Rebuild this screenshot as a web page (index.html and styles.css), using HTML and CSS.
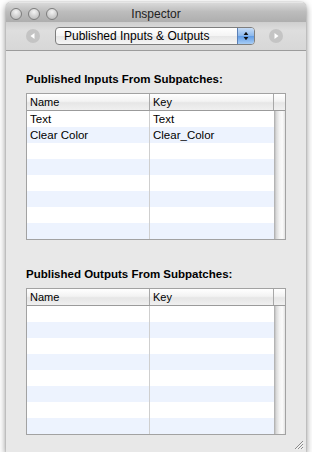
FILE: index.html
```html
<!DOCTYPE html>
<html>
<head>
<meta charset="utf-8">
<link rel="stylesheet" href="styles.css">
</head>
<body>
<div class="window">
  <div class="titlebar">
    <div class="lights">
      <span class="light"></span><span class="light"></span><span class="light"></span>
    </div>
    <div class="title">Inspector</div>
  </div>
  <div class="toolbar">
    <span class="nav"><svg width="14" height="14" viewBox="0 0 14 14"><path d="M8.5 4 L4.5 7 L8.5 10 Z" fill="#fff"/></svg></span>
    <div class="popup">
      <span class="popup-label">Published Inputs &amp; Outputs</span>
      <span class="stepper"><svg width="17" height="18" viewBox="0 0 17 18"><path d="M8.5 4.5 L11 8 L6 8 Z M8.5 13.5 L11 10 L6 10 Z" fill="#111"/></svg></span>
    </div>
    <span class="nav"><svg width="14" height="14" viewBox="0 0 14 14"><path d="M5.5 4 L9.5 7 L5.5 10 Z" fill="#fff"/></svg></span>
  </div>
  <div class="content">
    <section class="group">
      <h2 class="heading">Published Inputs From Subpatches:</h2>
      <div class="table">
        <div class="thead">
          <div class="th">Name</div>
          <div class="th">Key</div>
          <div class="th corner"></div>
        </div>
        <div class="tbody">
          <div class="rows">
            <div class="row"><div class="cell">Text</div><div class="cell">Text</div></div>
            <div class="row"><div class="cell">Clear Color</div><div class="cell">Clear_Color</div></div>
            <div class="row"><div class="cell"></div><div class="cell"></div></div>
            <div class="row"><div class="cell"></div><div class="cell"></div></div>
            <div class="row"><div class="cell"></div><div class="cell"></div></div>
            <div class="row"><div class="cell"></div><div class="cell"></div></div>
            <div class="row"><div class="cell"></div><div class="cell"></div></div>
            <div class="row"><div class="cell"></div><div class="cell"></div></div>
          </div>
          <div class="scroller"></div>
        </div>
      </div>
    </section>
    <section class="group">
      <h2 class="heading">Published Outputs From Subpatches:</h2>
      <div class="table">
        <div class="thead">
          <div class="th">Name</div>
          <div class="th">Key</div>
          <div class="th corner"></div>
        </div>
        <div class="tbody">
          <div class="rows">
            <div class="row"><div class="cell"></div><div class="cell"></div></div>
            <div class="row"><div class="cell"></div><div class="cell"></div></div>
            <div class="row"><div class="cell"></div><div class="cell"></div></div>
            <div class="row"><div class="cell"></div><div class="cell"></div></div>
            <div class="row"><div class="cell"></div><div class="cell"></div></div>
            <div class="row"><div class="cell"></div><div class="cell"></div></div>
            <div class="row"><div class="cell"></div><div class="cell"></div></div>
            <div class="row"><div class="cell"></div><div class="cell"></div></div>
          </div>
          <div class="scroller"></div>
        </div>
      </div>
    </section>
    <svg class="grip" width="12" height="12" viewBox="0 0 12 12">
      <path d="M11 3 L3 11 M11 6 L6 11 M11 9 L9 11" stroke="#8a8a8a" stroke-width="1"/>
      <path d="M11.5 4 L4 11.5 M11.5 7 L7 11.5 M11.5 10 L10 11.5" stroke="#fff" stroke-width="0.8"/>
    </svg>
  </div>
</div>
</body>
</html>
```

FILE: styles.css
```css
* { box-sizing: border-box; }
html, body { margin: 0; padding: 0; background: #fff; }
body {
  font-family: "Liberation Sans", Arial, sans-serif;
  color: #000;
  padding: 2px 0 0 6px;
}
.window {
  width: 300px;
  height: 450px;
  background: #e8e8e8;
  border-radius: 5px 5px 0 0;
  box-shadow: 0 3px 7px rgba(0,0,0,0.5), 0 0 1px rgba(0,0,0,0.4);
  display: flex;
  flex-direction: column;
  overflow: hidden;
}
.titlebar {
  height: 20px;
  background: linear-gradient(#d9d9d9, #bdbdbd 45%, #aeaeae);
  display: flex;
  align-items: center;
  position: relative;
  border-top: 1px solid #e6e6e6;
}
.lights {
  display: flex;
  gap: 6px;
  padding-left: 4px;
  padding-top: 2px;
}
.light {
  width: 12px;
  height: 12px;
  border-radius: 50%;
  background: radial-gradient(circle at 50% 30%, #f4f4f4, #cfcfcf 55%, #b4b4b4);
  border: 1px solid #7d7d7d;
}
.title {
  position: absolute;
  left: 0; right: 0;
  top: 3px;
  text-align: center;
  font-size: 12px;
  line-height: 16px;
  color: #222;
}
.toolbar {
  height: 29px;
  background: linear-gradient(#cfcfcf, #dedede 30%, #d7d7d7);
  border-bottom: 1px solid #9c9c9c;
  display: flex;
  align-items: center;
  padding: 0 0 0 20px;
}
.nav {
  width: 14px;
  height: 14px;
  border-radius: 50%;
  background: #c4c4c4;
  display: flex;
}
.popup {
  width: 200px;
  height: 18px;
  margin: 0 14px 0 15px;
  border: 1px solid #7e7e7e;
  border-radius: 4px;
  background: linear-gradient(#ffffff, #f4f4f4 50%, #e6e6e6 51%, #f5f5f5);
  display: flex;
  align-items: center;
  overflow: hidden;
}
.popup-label {
  flex: 1;
  font-size: 12px;
  line-height: 16px;
  padding-left: 8px;
}
.stepper {
  width: 17px;
  height: 16px;
  background: linear-gradient(#c6dcf6, #8ab7ec 50%, #5f9be5 51%, #a8cdf5);
  border-left: 1px solid #5a7fb5;
  display: flex;
  align-items: center;
  justify-content: center;
}
.content {
  flex: 1;
  padding: 21px 20px 0 20px;
  display: flex;
  flex-direction: column;
  gap: 27px;
  position: relative;
}
.heading {
  margin: 0 0 7px 0;
  font-size: 11.5px;
  line-height: 14px;
  font-weight: bold;
}
.table {
  width: 260px;
  border: 1px solid #a2a2a2;
  background: #fff;
}
.thead {
  display: grid;
  grid-template-columns: 123px 124px 11px;
  height: 17px;
  border-bottom: 1px solid #9b9b9b;
  background: linear-gradient(#ffffff, #f3f3f3 45%, #e6e6e6 55%, #f0f0f0);
}
.th {
  font-size: 11px;
  line-height: 16px;
  padding-left: 3px;
  border-right: 1px solid #a8a8a8;
}
.th.corner { border-right: 0; }
.tbody {
  display: flex;
  height: 128px;
}
.rows { width: 247px; }
.row {
  display: grid;
  grid-template-columns: 123px 124px;
  height: 16px;
}
.row:nth-child(even) { background: #edf3fe; }
.cell {
  font-size: 11.5px;
  line-height: 16px;
  padding-left: 3px;
  border-right: 1px solid #cfcfcf;
}
.cell:last-child { border-right: 0; }
.scroller {
  width: 11px;
  background: linear-gradient(to right, #a9a9a9, #d9d9d9 20%, #f3f3f3 50%, #fbfbfb 75%, #e4e4e4);
}
.grip {
  position: absolute;
  right: 2px;
  bottom: 2px;
}
```
